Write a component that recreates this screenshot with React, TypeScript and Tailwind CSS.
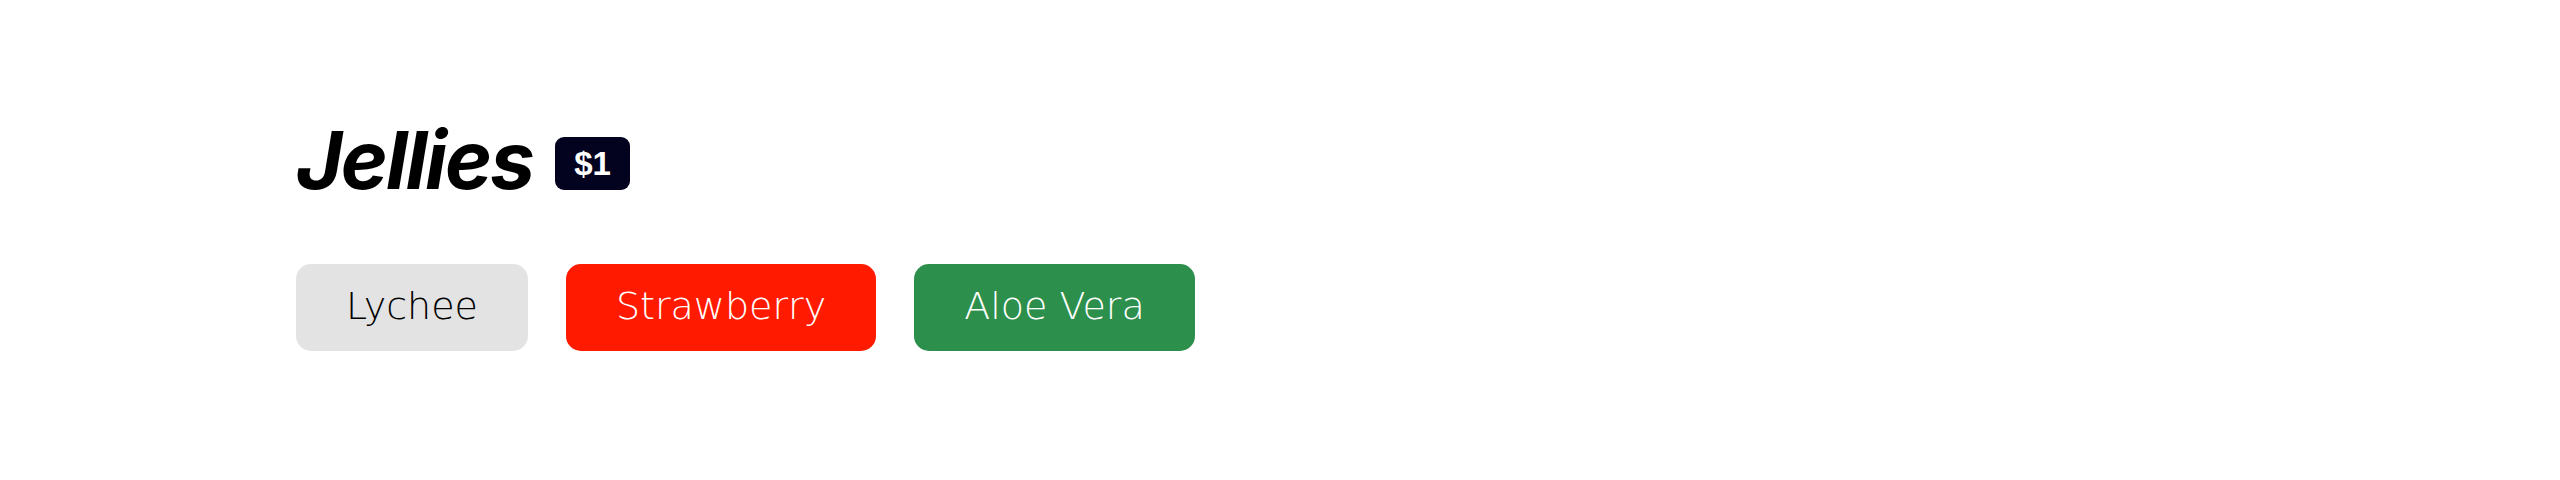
import React from 'react';

const flavours = [
  { name: 'Lychee', bg: 'bg-[#e3e3e3]', fg: 'text-black' },
  { name: 'Strawberry', bg: 'bg-[#ff1a00]', fg: 'text-white' },
  { name: 'Aloe Vera', bg: 'bg-[#2c8f4b]', fg: 'text-white' },
];

export default function App() {
  return (
    <div className="min-h-[480px] w-full bg-white pl-[296px] pt-[120px]">
      <div className="flex items-start gap-[22px]">
        <h1 className="font-['Inter',sans-serif] text-[80px] font-bold italic leading-[80px] tracking-[-2px] text-black">
          Jellies
        </h1>
        <span className="mt-[17px] flex h-[53px] w-[75px] items-center justify-center rounded-[9px] bg-[#03021f] font-['Liberation_Sans',sans-serif] text-[33px] font-bold text-white">
          $1
        </span>
      </div>

      <div className="mt-[64px] flex gap-[38px]">
        {flavours.map((f) => (
          <button
            key={f.name}
            className={`h-[87px] rounded-[15px] px-[50px] pb-[3px] font-['DejaVu_Sans',sans-serif] text-[38px] font-extralight leading-none ${f.bg} ${f.fg}`}
          >
            {f.name}
          </button>
        ))}
      </div>
    </div>
  );
}
